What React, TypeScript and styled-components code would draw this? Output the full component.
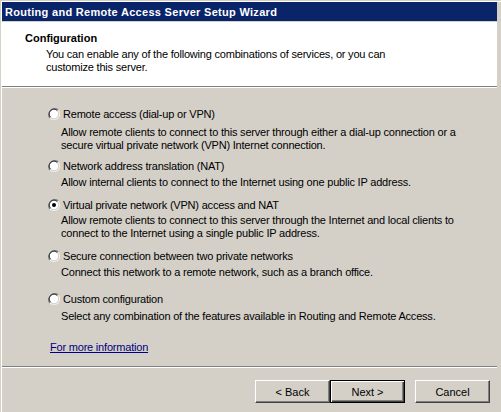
import React from "react";
import styled, { createGlobalStyle } from "styled-components";

const Global = createGlobalStyle`
  html, body { margin: 0; padding: 0; background: #d4d0c8; }
  body {
    font-family: "Liberation Sans", Arial, sans-serif;
    font-size: 11px;
    letter-spacing: -0.2px;
    color: #000;
  }
`;

const Window = styled.div`
  width: 501px;
  height: 412px;
  box-sizing: border-box;
  background: #d4d0c8;
  border-left: 1px solid #d4d0c8;
  border-top: 1px solid #d4d0c8;
  box-shadow: inset 1px 1px 0 #fff;
  padding: 1px 4px 0 1px;
  display: flex;
  flex-direction: column;
  overflow: hidden;
`;

const TitleBar = styled.div`
  flex: none;
  height: 19px;
  background: #0a246a;
  color: #fff;
  font-weight: bold;
  font-size: 11px;
  letter-spacing: 0.3px;
  display: flex;
  align-items: center;
  padding-left: 3px;
`;

const Header = styled.div`
  flex: none;
  background: #fff;
  margin-top: 1px;
  height: 65px;
  box-sizing: border-box;
  padding: 10px 0 0 23px;
  border-bottom: 1px solid #808080;
  box-shadow: 0 1px 0 #fff;
`;

const HeaderTitle = styled.div`
  font-weight: bold;
  font-size: 11px;
  letter-spacing: 0;
  line-height: 13px;
`;

const HeaderText = styled.div`
  padding-left: 21px;
  line-height: 13px;
  margin-top: 3px;
  white-space: nowrap;
`;

const Body = styled.div`
  flex: 1;
  display: flex;
  flex-direction: column;
  padding: 20px 0 0 46px;
`;

const Option = styled.div<{ $top: number }>`
  display: flex;
  flex-direction: column;
  margin-top: ${(p) => p.$top}px;
`;

const OptionRow = styled.label`
  display: flex;
  align-items: center;
  height: 14px;
  gap: 3px;
`;

const OptionDesc = styled.div<{ $gap: number }>`
  padding-left: 13px;
  margin-top: ${(p) => p.$gap}px;
  line-height: 13px;
  white-space: nowrap;
`;

const MoreLink = styled.a`
  align-self: flex-start;
  color: #000080;
  text-decoration: underline;
  margin: 18px 0 0 2px;
  line-height: 13px;
  cursor: pointer;
`;

const Footer = styled.div`
  flex: none;
  border-top: 1px solid #808080;
  box-shadow: inset 0 1px 0 #fff;
  height: 46px;
  display: flex;
  align-items: flex-start;
  padding: 13px 0 0 253px;
  box-sizing: border-box;
`;

const Button = styled.button<{ $default?: boolean; $gapLeft?: number }>`
  width: 75px;
  height: 23px;
  margin-left: ${(p) => p.$gapLeft ?? 0}px;
  background: #d4d0c8;
  font-family: "Liberation Sans", Arial, sans-serif;
  font-size: 11px;
  letter-spacing: 0;
  color: #000;
  padding: 0;
  box-sizing: border-box;
  border: 1px solid;
  border-color: ${(p) => (p.$default ? "#000" : "#fff #404040 #404040 #fff")};
  box-shadow: ${(p) =>
    p.$default
      ? "inset 1px 1px 0 #fff, inset -1px -1px 0 #404040, inset -2px -2px 0 #808080"
      : "inset -1px -1px 0 #808080"};
`;

const RadioSvg = styled.svg`
  flex: none;
  display: block;
`;

function Radio({ checked }: { checked?: boolean }) {
  return (
    <RadioSvg width="12" height="12" viewBox="0 0 12 12">
      <circle cx="6" cy="6" r="6" fill="#fff" />
      <path d="M1.8 10.2 A6 6 0 0 1 10.2 1.8" stroke="#808080" strokeWidth="1.2" fill="none" />
      <path d="M2.6 9.4 A4.8 4.8 0 0 1 9.4 2.6" stroke="#404040" strokeWidth="1.2" fill="none" />
      <path d="M9.4 2.6 A4.8 4.8 0 0 1 2.6 9.4" stroke="#d4d0c8" strokeWidth="1.2" fill="none" />
      <circle cx="6" cy="6" r="3.8" fill="#fff" />
      {checked && <circle cx="6" cy="6" r="2" fill="#000" />}
    </RadioSvg>
  );
}

type Item = { label: string; desc: string[]; checked?: boolean; top: number; gap: number };

const items: Item[] = [
  {
    label: "Remote access (dial-up or VPN)",
    desc: [
      "Allow remote clients to connect to this server through either a dial-up connection or a",
      "secure virtual private network (VPN) Internet connection.",
    ],
    top: 0,
    gap: 5,
  },
  {
    label: "Network address translation (NAT)",
    desc: ["Allow internal clients to connect to the Internet using one public IP address."],
    top: 7,
    gap: 3,
  },
  {
    label: "Virtual private network (VPN) access and NAT",
    desc: [
      "Allow remote clients to connect to this server through the Internet and local clients to",
      "connect to the Internet using a single public IP address.",
    ],
    checked: true,
    top: 9,
    gap: 2,
  },
  {
    label: "Secure connection between two private networks",
    desc: ["Connect this network to a remote network, such as a branch office."],
    top: 9,
    gap: 3,
  },
  {
    label: "Custom configuration",
    desc: ["Select any combination of the features available in Routing and Remote Access."],
    top: 13,
    gap: 4,
  },
];

export default function App() {
  return (
    <>
      <Global />
      <Window>
        <TitleBar>Routing and Remote Access Server Setup Wizard</TitleBar>
        <Header>
          <HeaderTitle>Configuration</HeaderTitle>
          <HeaderText>
            You can enable any of the following combinations of services, or you can
            <br />
            customize this server.
          </HeaderText>
        </Header>
        <Body>
          {items.map((it) => (
            <Option key={it.label} $top={it.top}>
              <OptionRow>
                <Radio checked={it.checked} />
                <span>{it.label}</span>
              </OptionRow>
              <OptionDesc $gap={it.gap}>
                {it.desc.map((line, i) => (
                  <div key={i}>{line}</div>
                ))}
              </OptionDesc>
            </Option>
          ))}
          <MoreLink>For more information </MoreLink>
        </Body>
        <Footer>
          <Button>&lt; Back</Button>
          <Button $default>Next &gt;</Button>
          <Button $gapLeft={10}>Cancel</Button>
        </Footer>
      </Window>
    </>
  );
}
